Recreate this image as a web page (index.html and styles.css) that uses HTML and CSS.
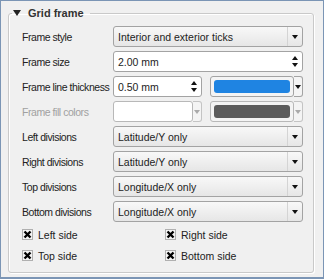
FILE: index.html
```html
<!DOCTYPE html>
<html lang="en">
<head>
  <meta charset="UTF-8">
  <title>Grid frame</title>
  <link rel="stylesheet" href="styles.css">
</head>
<body>

  <div class="window">
    <fieldset class="group">
      <legend><span class="caret"></span>Grid frame</legend>

      <div class="form">
        <!-- Frame style -->
        <label>Frame style</label>
        <div class="combo"><span class="value">Interior and exterior ticks</span><span class="drop"></span></div>

        <!-- Frame size -->
        <label>Frame size</label>
        <div class="spin"><span class="value">2.00 mm</span><span class="arrows"><i class="up"></i><i class="down"></i></span></div>

        <!-- Line thickness + colour -->
        <label>Frame line thickness</label>
        <div class="pair">
          <div class="spin"><span class="value">0.50 mm</span><span class="arrows"><i class="up"></i><i class="down"></i></span></div>
          <div class="color-btn"><span class="swatch blue"></span><span class="drop"></span></div>
        </div>

        <!-- Fill colours (disabled) -->
        <label class="disabled">Frame fill colors</label>
        <div class="pair disabled">
          <div class="color-btn light"><span class="swatch white"></span><span class="drop"></span></div>
          <div class="color-btn"><span class="swatch grey"></span><span class="drop"></span></div>
        </div>

        <label>Left divisions</label>
        <div class="combo"><span class="value">Latitude/Y only</span><span class="drop"></span></div>

        <label>Right divisions</label>
        <div class="combo"><span class="value">Latitude/Y only</span><span class="drop"></span></div>

        <label>Top divisions</label>
        <div class="combo"><span class="value">Longitude/X only</span><span class="drop"></span></div>

        <label>Bottom divisions</label>
        <div class="combo"><span class="value">Longitude/X only</span><span class="drop"></span></div>
      </div>

      <div class="checks">
        <label class="check"><span class="box"><svg width="9" height="9" viewBox="0 0 9 9"><path d="M1.5 1.5 L7.5 7.5 M7.5 1.5 L1.5 7.5" stroke="#000" stroke-width="2.4"/></svg></span>Left side</label>
        <label class="check"><span class="box"><svg width="9" height="9" viewBox="0 0 9 9"><path d="M1.5 1.5 L7.5 7.5 M7.5 1.5 L1.5 7.5" stroke="#000" stroke-width="2.4"/></svg></span>Right side</label>
        <label class="check"><span class="box"><svg width="9" height="9" viewBox="0 0 9 9"><path d="M1.5 1.5 L7.5 7.5 M7.5 1.5 L1.5 7.5" stroke="#000" stroke-width="2.4"/></svg></span>Top side</label>
        <label class="check"><span class="box"><svg width="9" height="9" viewBox="0 0 9 9"><path d="M1.5 1.5 L7.5 7.5 M7.5 1.5 L1.5 7.5" stroke="#000" stroke-width="2.4"/></svg></span>Bottom side</label>
      </div>
    </fieldset>
  </div>

</body>
</html>
```

FILE: styles.css
```css
* {
  margin: 0;
  padding: 0;
  box-sizing: border-box;
  font-family: 'Liberation Sans', Arial, sans-serif;
}

body {
  background: #ffffff;
  color: #222222;
  font-size: 10.5px;
}

.window {
  width: 324px;
  height: 279px;
  border: 1px solid #7b95b5;
  border-bottom-width: 2px;
  background: #f0f0f0;
  padding-top: 6px;
}

.group {
  margin: 0 9px 0 7px;
  height: 266px;
  border: 1px solid #c9c9c9;
  border-radius: 3px;
  box-shadow: inset 1px 1px 0 #ffffff, 1px 1px 0 #ffffff;
  padding: 6px 10px 0 13px;
}

.group legend {
  margin-left: -10px;
  padding: 0 6px 0 1px;
  font-weight: bold;
  font-size: 11px;
  color: #333333;
  line-height: 13px;
}

.caret {
  display: inline-block;
  width: 0;
  height: 0;
  border-left: 4px solid transparent;
  border-right: 4px solid transparent;
  border-top: 6px solid #222222;
  margin-right: 7px;
  vertical-align: 1px;
}

.form {
  display: grid;
  grid-template-columns: 91px 1fr;
  grid-auto-rows: 21px;
  row-gap: 4px;
  align-items: center;
}

.form label {
  white-space: nowrap;
  color: #222222;
  letter-spacing: -0.45px;
}

.disabled,
.form label.disabled {
  color: #a0a0a0;
}

.combo, .spin {
  display: flex;
  height: 21px;
  border: 1px solid #a3a3a3;
  border-radius: 3px;
  align-items: center;
}

.combo {
  background: linear-gradient(#f8f8f8, #e6e6e6);
}

.spin {
  background: #ffffff;
}

.value {
  flex: 1;
  padding-left: 4px;
  white-space: nowrap;
  overflow: hidden;
}

.drop {
  width: 15px;
  height: 100%;
  border-left: 1px solid #d4d4d4;
  position: relative;
}

.drop::after {
  content: '';
  position: absolute;
  left: 4px;
  top: 8px;
  border-left: 3px solid transparent;
  border-right: 3px solid transparent;
  border-top: 4px solid #111111;
}

.arrows {
  width: 14px;
  display: flex;
  flex-direction: column;
  align-items: center;
  justify-content: center;
  gap: 3px;
}

.arrows i {
  width: 0;
  height: 0;
  border-left: 3px solid transparent;
  border-right: 3px solid transparent;
}

.arrows .up {
  border-bottom: 4px solid #111111;
}

.arrows .down {
  border-top: 4px solid #111111;
}

.pair {
  display: grid;
  grid-template-columns: 89px 1fr;
  gap: 8px;
  height: 21px;
}

.color-btn {
  display: flex;
  height: 21px;
}

.swatch {
  flex: 1;
  border: 1px solid #a3a3a3;
  border-radius: 3px;
  padding: 3px;
  background: #f4f4f4;
  position: relative;
}

.swatch::after {
  content: '';
  position: absolute;
  inset: 3px;
  border-radius: 3px;
}

.swatch.blue::after {
  background: #1f84e2;
}

.swatch.grey::after {
  background: #5c5c5c;
}

.swatch.white {
  background: #ffffff;
}

.color-btn .drop {
  width: 9px;
  border: 1px solid #a3a3a3;
  border-left: none;
  border-radius: 0 3px 3px 0;
  background: #f4f4f4;
}

.color-btn .drop::after {
  left: 1px;
}

.pair.disabled .drop {
  border-color: #c4c4c4;
}

.pair.disabled .drop::after {
  border-top-color: #aaaaaa;
}

.pair.disabled .swatch {
  border-color: #b8b8b8;
}

.checks {
  display: grid;
  grid-template-columns: 143px 1fr;
  grid-auto-rows: 21px;
  margin-top: 2px;
  align-items: center;
}

.check {
  display: flex;
  align-items: center;
  gap: 5px;
  white-space: nowrap;
}

.box {
  width: 11px;
  height: 11px;
  border: 1px solid #b0b0b0;
  background: #f4f4f4;
  display: flex;
  align-items: center;
  justify-content: center;
}

.box svg {
  display: block;
}
```
